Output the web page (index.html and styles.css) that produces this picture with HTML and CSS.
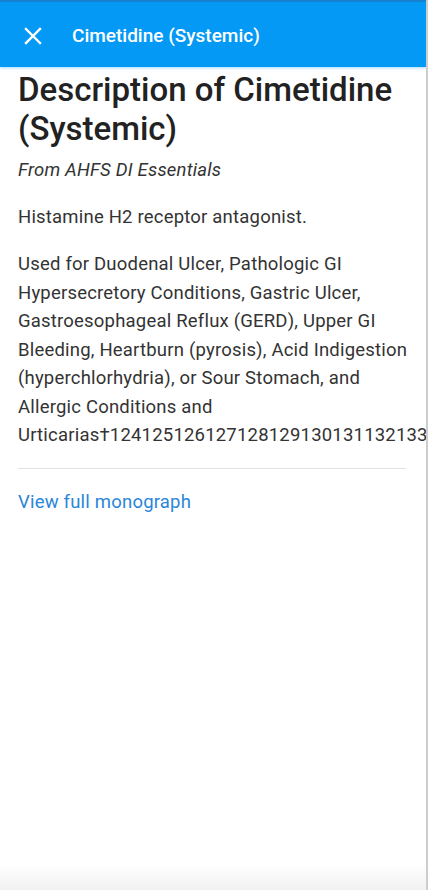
FILE: index.html
```html
<!DOCTYPE html>
<html lang="en">
<head>
    <meta charset="UTF-8">
    <title>Cimetidine (Systemic)</title>
    <link rel="stylesheet" href="styles.css">
</head>
<body>
    <div class="app">
        <header class="topbar">
            <button class="close" aria-label="Close">
                <svg width="18" height="18" viewBox="0 0 18 18">
                    <path d="M2 2 L16 16 M16 2 L2 16" stroke="#fff" stroke-width="2.4" stroke-linecap="square" fill="none"/>
                </svg>
            </button>
            <span class="topbar-title">Cimetidine (Systemic)</span>
        </header>

        <main class="content">
            <h1>Description of Cimetidine (Systemic)</h1>
            <p class="source">From AHFS DI Essentials</p>
            <p>Histamine H2 receptor antagonist.</p>
            <p class="uses">Used for Duodenal Ulcer, Pathologic GI Hypersecretory Conditions, Gastric Ulcer, Gastroesophageal Reflux (GERD), Upper GI Bleeding, Heartburn (pyrosis), Acid Indigestion (hyperchlorhydria), or Sour Stomach, and Allergic Conditions and Urticarias&dagger;124125126127128129130131132133134135</p>
            <hr>
            <a class="more" href="#">View full monograph</a>
        </main>
    </div>
</body>
</html>
```

FILE: styles.css
```css
body { margin: 0; font-family: Roboto, "Noto Sans", sans-serif; background: #fff; color: #212121; }
.app { height: 890px; overflow: hidden; border-right: 2px solid #cdcdcd; background: linear-gradient(#fff 97%, #f2f2f2); }

.topbar { height: 67px; background: #0399f5; border-top: 2px solid #1680d0; box-shadow: 0 1px 3px rgba(3, 153, 245, 0.35); display: flex; align-items: center; box-sizing: border-box; }
.close { background: none; border: 0; padding: 0; margin: 2px 0 0 24px; width: 18px; height: 18px; display: flex; }
.topbar-title { color: #fff; font-size: 19px; font-weight: 500; margin-left: 30px; margin-top: 2px; }

.content { padding: 0 18px; }
h1 { font-size: 33px; font-weight: 500; line-height: 39px; margin: 3px 0 0; color: #222; }
p { font-size: 18.5px; line-height: 28.5px; letter-spacing: 0.2px; margin: 0; color: #333; }
.source { font-style: italic; margin-top: 8px; }
p + p { margin-top: 18.5px; }
hr { border: 0; border-top: 1px solid #e2e2e2; margin: 18px 2px 0 0; }
.more { display: inline-block; margin-top: 22px; font-size: 18.5px; letter-spacing: 0.2px; color: #2a86d8; text-decoration: none; }
```
